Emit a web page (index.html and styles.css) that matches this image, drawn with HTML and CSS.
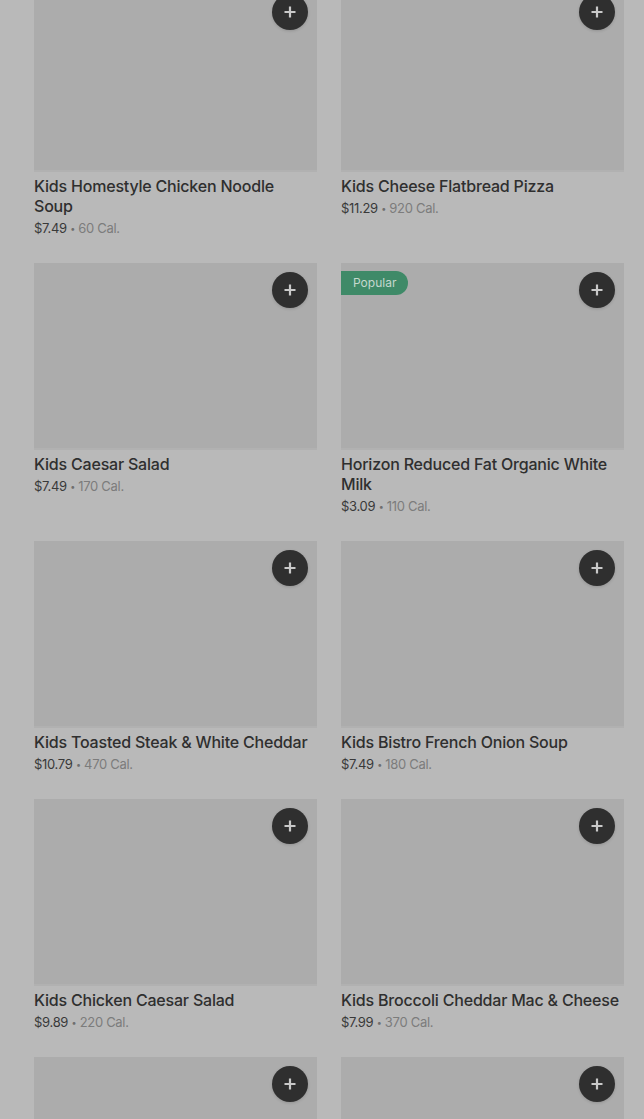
FILE: index.html
```html
<!DOCTYPE html>
<html>
<head>
<meta charset="utf-8">
<link rel="stylesheet" href="styles.css">
</head>
<body>
<div class="page">
  <div class="grid">
    <div class="card">
      <div class="thumb"><button class="add"><svg viewBox="0 0 14 14" width="14" height="14"><path d="M7 1.5v11M1.5 7h11" stroke="currentColor" stroke-width="2.2"/></svg></button></div>
      <div class="title">Kids Homestyle Chicken Noodle Soup</div>
      <div class="meta"><span class="price">$7.49</span> <span class="dot">•</span> <span class="cal">60 Cal.</span></div>
    </div>
    <div class="card">
      <div class="thumb"><button class="add"><svg viewBox="0 0 14 14" width="14" height="14"><path d="M7 1.5v11M1.5 7h11" stroke="currentColor" stroke-width="2.2"/></svg></button></div>
      <div class="title">Kids Cheese Flatbread Pizza</div>
      <div class="meta"><span class="price">$11.29</span> <span class="dot">•</span> <span class="cal">920 Cal.</span></div>
    </div>
    <div class="card">
      <div class="thumb"><button class="add"><svg viewBox="0 0 14 14" width="14" height="14"><path d="M7 1.5v11M1.5 7h11" stroke="currentColor" stroke-width="2.2"/></svg></button></div>
      <div class="title">Kids Caesar Salad</div>
      <div class="meta"><span class="price">$7.49</span> <span class="dot">•</span> <span class="cal">170 Cal.</span></div>
    </div>
    <div class="card">
      <div class="thumb"><span class="badge">Popular</span><button class="add"><svg viewBox="0 0 14 14" width="14" height="14"><path d="M7 1.5v11M1.5 7h11" stroke="currentColor" stroke-width="2.2"/></svg></button></div>
      <div class="title">Horizon Reduced Fat Organic White Milk</div>
      <div class="meta"><span class="price">$3.09</span> <span class="dot">•</span> <span class="cal">110 Cal.</span></div>
    </div>
    <div class="card">
      <div class="thumb"><button class="add"><svg viewBox="0 0 14 14" width="14" height="14"><path d="M7 1.5v11M1.5 7h11" stroke="currentColor" stroke-width="2.2"/></svg></button></div>
      <div class="title">Kids Toasted Steak &amp; White Cheddar</div>
      <div class="meta"><span class="price">$10.79</span> <span class="dot">•</span> <span class="cal">470 Cal.</span></div>
    </div>
    <div class="card">
      <div class="thumb"><button class="add"><svg viewBox="0 0 14 14" width="14" height="14"><path d="M7 1.5v11M1.5 7h11" stroke="currentColor" stroke-width="2.2"/></svg></button></div>
      <div class="title">Kids Bistro French Onion Soup</div>
      <div class="meta"><span class="price">$7.49</span> <span class="dot">•</span> <span class="cal">180 Cal.</span></div>
    </div>
    <div class="card">
      <div class="thumb"><button class="add"><svg viewBox="0 0 14 14" width="14" height="14"><path d="M7 1.5v11M1.5 7h11" stroke="currentColor" stroke-width="2.2"/></svg></button></div>
      <div class="title">Kids Chicken Caesar Salad</div>
      <div class="meta"><span class="price">$9.89</span> <span class="dot">•</span> <span class="cal">220 Cal.</span></div>
    </div>
    <div class="card">
      <div class="thumb"><button class="add"><svg viewBox="0 0 14 14" width="14" height="14"><path d="M7 1.5v11M1.5 7h11" stroke="currentColor" stroke-width="2.2"/></svg></button></div>
      <div class="title">Kids Broccoli Cheddar Mac &amp; Cheese</div>
      <div class="meta"><span class="price">$7.99</span> <span class="dot">•</span> <span class="cal">370 Cal.</span></div>
    </div>
    <div class="card">
      <div class="thumb"><button class="add"><svg viewBox="0 0 14 14" width="14" height="14"><path d="M7 1.5v11M1.5 7h11" stroke="currentColor" stroke-width="2.2"/></svg></button></div>
    </div>
    <div class="card">
      <div class="thumb"><button class="add"><svg viewBox="0 0 14 14" width="14" height="14"><path d="M7 1.5v11M1.5 7h11" stroke="currentColor" stroke-width="2.2"/></svg></button></div>
    </div>
  </div>
</div>
</body>
</html>
```
FILE: styles.css
```css
html, body {
  margin: 0;
  padding: 0;
  background: #b9b9b9;
  overflow: hidden;
  height: 1119px;
}
.page {
  padding-left: 34px;
  font-family: Inter, "Noto Sans", sans-serif;
}
.grid {
  margin-top: -15px;
  display: grid;
  grid-template-columns: 283px 283px;
  column-gap: 24px;
  row-gap: 25px;
}
.card {
  display: flex;
  flex-direction: column;
}
.thumb {
  position: relative;
  height: 187px;
  background: #acacac;
  box-shadow: inset 0 -2px 0 #b1b1b1;
}
.add {
  position: absolute;
  top: 9px;
  right: 9px;
  width: 36px;
  height: 36px;
  border-radius: 50%;
  border: none;
  padding: 0;
  background: #2f2f2f;
  color: #c9c9c9;
  display: flex;
  align-items: center;
  justify-content: center;
  box-shadow: 0 1px 3px rgba(0,0,0,0.15);
}
.add svg { display: block; }
.badge {
  position: absolute;
  top: 8px;
  left: 0;
  height: 24px;
  padding: 0 12px;
  display: flex;
  align-items: center;
  background: #3f8a68;
  color: #c5d8ce;
  font-size: 12px;
  line-height: 24px;
  border-radius: 0 12px 12px 0;
}
.title {
  margin-top: 4px;
  padding-right: 4px;
  font-size: 16px;
  line-height: 20px;
  font-weight: 500;
  color: #2f2f2f;
  letter-spacing: -0.2px;
}
.meta {
  margin-top: 3px;
  font-size: 13px;
  line-height: 19px;
  color: #6e6e6e;
  letter-spacing: -0.3px;
}
.dot {
  font-size: 9px;
  vertical-align: 1px;
}
.price {
  color: #393939;
}
.cal {
  color: #7c7c7c;
}
```
